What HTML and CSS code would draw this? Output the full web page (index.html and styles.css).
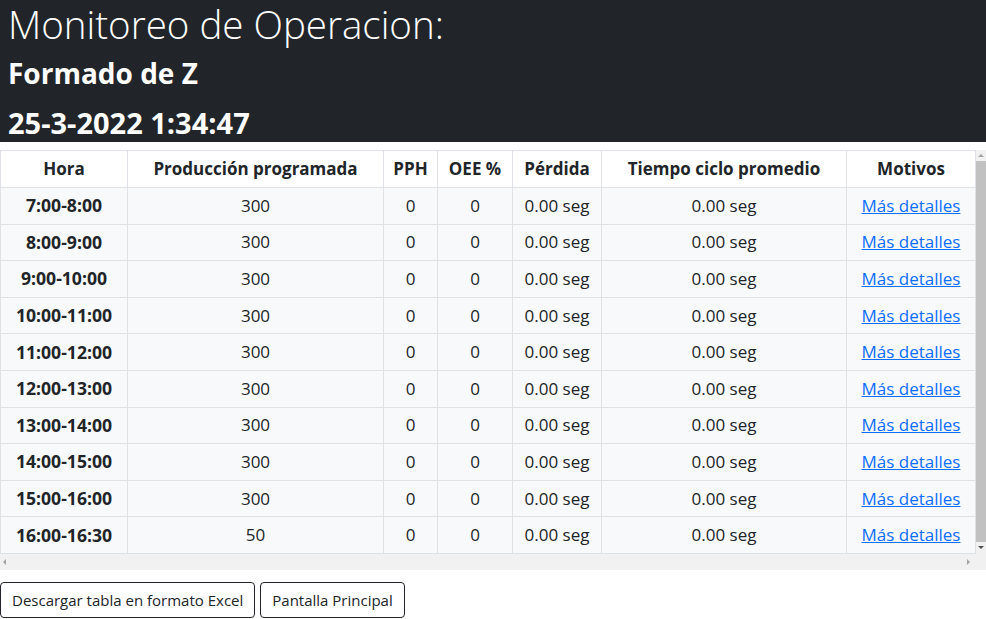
FILE: index.html
```html
<!DOCTYPE html>
<html lang="es">
<head>
<meta charset="utf-8">
<title>Monitoreo de Operacion</title>
<link rel="stylesheet" href="styles.css">
</head>
<body>
<header class="bar">
  <h1 class="title">Monitoreo de Operacion:</h1>
  <h2 class="sub">Formado de Z</h2>
  <h2 class="sub date">25-3-2022 1:34:47</h2>
</header>
<div class="scroller">
  <div class="scroll-main">
    <table class="grid">
      <colgroup>
        <col style="width:127px"><col style="width:256px"><col style="width:54px"><col style="width:75px"><col style="width:89px"><col style="width:245px"><col style="width:129px">
      </colgroup>
      <thead>
        <tr><th>Hora</th><th>Producción programada</th><th>PPH</th><th>OEE %</th><th>Pérdida</th><th>Tiempo ciclo promedio</th><th>Motivos</th></tr>
      </thead>
      <tbody>
        <tr><th>7:00-8:00</th><td>300</td><td>0</td><td>0</td><td>0.00 seg</td><td>0.00 seg</td><td><a href="#">Más detalles</a></td></tr>
        <tr><th>8:00-9:00</th><td>300</td><td>0</td><td>0</td><td>0.00 seg</td><td>0.00 seg</td><td><a href="#">Más detalles</a></td></tr>
        <tr><th>9:00-10:00</th><td>300</td><td>0</td><td>0</td><td>0.00 seg</td><td>0.00 seg</td><td><a href="#">Más detalles</a></td></tr>
        <tr><th>10:00-11:00</th><td>300</td><td>0</td><td>0</td><td>0.00 seg</td><td>0.00 seg</td><td><a href="#">Más detalles</a></td></tr>
        <tr><th>11:00-12:00</th><td>300</td><td>0</td><td>0</td><td>0.00 seg</td><td>0.00 seg</td><td><a href="#">Más detalles</a></td></tr>
        <tr><th>12:00-13:00</th><td>300</td><td>0</td><td>0</td><td>0.00 seg</td><td>0.00 seg</td><td><a href="#">Más detalles</a></td></tr>
        <tr><th>13:00-14:00</th><td>300</td><td>0</td><td>0</td><td>0.00 seg</td><td>0.00 seg</td><td><a href="#">Más detalles</a></td></tr>
        <tr><th>14:00-15:00</th><td>300</td><td>0</td><td>0</td><td>0.00 seg</td><td>0.00 seg</td><td><a href="#">Más detalles</a></td></tr>
        <tr><th>15:00-16:00</th><td>300</td><td>0</td><td>0</td><td>0.00 seg</td><td>0.00 seg</td><td><a href="#">Más detalles</a></td></tr>
        <tr><th>16:00-16:30</th><td>50</td><td>0</td><td>0</td><td>0.00 seg</td><td>0.00 seg</td><td><a href="#">Más detalles</a></td></tr>
      </tbody>
    </table>
    <div class="vbar">
      <span class="arrow up"></span>
      <span class="thumb"></span>
      <span class="arrow down"></span>
    </div>
  </div>
  <div class="hbar">
    <span class="arrow left"></span>
    <span class="arrow right"></span>
  </div>
</div>
<div class="actions">
  <button class="btn">Descargar tabla en formato Excel</button>
  <button class="btn">Pantalla Principal</button>
</div>
</body>
</html>
```
FILE: styles.css
```css
* { box-sizing: border-box; }
html, body { margin: 0; padding: 0; }
body {
  font-family: "Open Sans", "Noto Sans", sans-serif;
  font-size: 16px;
  color: #212529;
  background: #fff;
}
.bar {
  background: #212529;
  color: #fff;
  height: 142px;
  padding: 0 8px;
  display: flex;
  flex-direction: column;
}
.title {
  margin: -2px 0 -2px;
  font-size: 38.5px;
  font-weight: 300;
  line-height: 52px;
  white-space: nowrap;
}
.sub {
  margin: 0;
  font-size: 28px;
  font-weight: 700;
  line-height: 50px;
  white-space: nowrap;
}
.date { font-size: 29px; line-height: 46px; padding-top: 2px; }
.scroller {
  margin-top: 8px;
  width: 986px;
}
.scroll-main {
  display: flex;
  height: 403px;
}
.grid {
  border-collapse: collapse;
  table-layout: fixed;
  width: 976px;
  flex: none;
  font-size: 17px;
}
.grid th, .grid td {
  border: 1px solid #dee2e6;
  text-align: center;
  padding: 0 2px 1px;
  white-space: nowrap;
  overflow: hidden;
}
.grid thead th {
  background: #fff;
  height: 37px;
  font-weight: 700;
}
.grid tbody tr { height: 36.6px; }
.grid tbody th, .grid tbody td { background: #f8f9fa; }
.grid tbody th { font-weight: 700; font-size: 17.6px; }
.grid a { color: #0d6efd; text-decoration: underline; }
.vbar {
  flex: none;
  width: 10px;
  background: #f1f1f1;
  display: flex;
  flex-direction: column;
  align-items: center;
  padding: 4px 0;
}
.thumb {
  flex: 1;
  width: 10px;
  background: #c1c1c1;
  margin: 4px 0;
}
.hbar {
  height: 17px;
  background: #f1f1f1;
  display: flex;
  justify-content: space-between;
  align-items: center;
  padding: 0 16px 0 3px;
}
.arrow { width: 0; height: 0; display: block; }
.arrow.up { border-left: 3px solid transparent; border-right: 3px solid transparent; border-bottom: 3px solid #a3a3a3; }
.arrow.down { border-left: 3px solid transparent; border-right: 3px solid transparent; border-top: 3px solid #505050; }
.arrow.left { border-top: 3px solid transparent; border-bottom: 3px solid transparent; border-right: 3px solid #a3a3a3; }
.arrow.right { border-top: 3px solid transparent; border-bottom: 3px solid transparent; border-left: 3px solid #a3a3a3; }
.actions {
  margin-top: 12px;
  display: flex;
  gap: 5px;
}
.btn {
  font-family: inherit;
  font-size: 15px;
  color: #212529;
  background: #fff;
  border: 1px solid #212529;
  border-radius: 4px;
  height: 36px;
  padding: 0 11px;
}
```
